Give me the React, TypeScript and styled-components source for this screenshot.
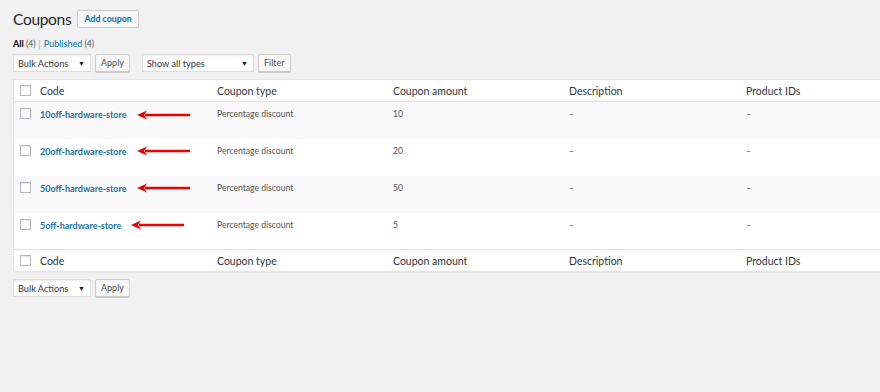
import styled, { createGlobalStyle } from "styled-components";

const Global = createGlobalStyle`
  body {
    margin: 0;
    background: #f1f1f1;
    font-family: Lato, "Noto Sans", sans-serif;
    color: #444;
    font-size: 11px;
  }
`;

const Wrap = styled.div`
  padding: 10px 0 0 13px;
  width: 880px;
  height: 392px;
  box-sizing: border-box;
  overflow: hidden;
`;
const TitleRow = styled.div`
  display: flex;
  align-items: center;
  gap: 6px;
  height: 18px;
`;
const Title = styled.h1`
  margin: 0;
  font-size: 15.5px;
  letter-spacing: -0.3px;
  font-weight: 400;
  color: #23282d;
  line-height: 18px;
`;
const AddButton = styled.a`
  display: inline-block;
  border: 1px solid #ccc;
  background: #f7f7f7;
  color: #0073aa;
  font-size: 8.8px;
  font-weight: 700;
  padding: 0 6px;
  height: 18px;
  line-height: 16px;
  box-sizing: border-box;
  border-radius: 2px;
`;
const Views = styled.div`
  margin-top: 10px;
  font-size: 9px;
  color: #555;
  height: 12px;
  line-height: 12px;
  b { color: #000; font-weight: 700; }
  a { color: #0073aa; }
  span.count { color: #555; font-size: 8.5px; }
`;
const Sep = styled.span`
  color: #a0a5aa;
  margin: 0 3px;
`;
const Actions = styled.div<{ top: number }>`
  display: flex;
  align-items: center;
  height: 18px;
  margin-top: ${(p) => p.top}px;
`;
const Select = styled.div<{ w: number; ml?: number }>`
  width: ${(p) => p.w}px;
  margin-left: ${(p) => p.ml || 0}px;
  height: 18px;
  box-sizing: border-box;
  border: 1px solid #ddd;
  background: #fff;
  display: flex;
  align-items: center;
  justify-content: space-between;
  padding: 0 5px 0 4px;
  font-size: 9.2px;
  color: #32373c;
  box-shadow: inset 0 1px 2px rgba(0,0,0,0.07);
`;
const Caret = styled.span`
  font-size: 7px;
  color: #222;
`;
const Btn = styled.div<{ ml: number }>`
  margin-left: ${(p) => p.ml}px;
  height: 18px;
  box-sizing: border-box;
  border: 1px solid #ccc;
  background: #f7f7f7;
  color: #555;
  font-size: 9px;
  padding: 0 5px;
  line-height: 16px;
  border-radius: 2px;
  box-shadow: 0 1px 0 #ccc;
`;
const Table = styled.table`
  margin-top: 7px;
  width: 900px;
  border-collapse: collapse;
  background: #fff;
  border: 1px solid #e5e5e5;
  border-right: none;
  box-shadow: 0 1px 1px rgba(0,0,0,0.04);
  table-layout: fixed;
`;
const Th = styled.th<{ w?: number }>`
  width: ${(p) => (p.w ? p.w + "px" : "auto")};
  text-align: left;
  font-weight: 400;
  font-size: 10.5px;
  color: #32373c;
  height: 21px;
  padding: 0;
  vertical-align: middle;
`;
const HeadRow = styled.tr<{ foot?: boolean }>`
  border-bottom: ${(p) => (p.foot ? "none" : "1px solid #e1e1e1")};
  border-top: ${(p) => (p.foot ? "1px solid #e1e1e1" : "none")};
`;
const Row = styled.tr<{ odd: boolean }>`
  background: ${(p) => (p.odd ? "#f9f9f9" : "#fff")};
  height: 37px;
`;
const Td = styled.td`
  padding: 6px 0 0 0;
  vertical-align: top;
  font-size: 8.6px;
  color: #555;
  line-height: 13px;
`;
const Box = styled.span`
  display: block;
  width: 11px;
  height: 11px;
  border: 1px solid #b4b9be;
  box-sizing: border-box;
  background: #fff;
  margin-left: 6px;
  box-shadow: inset 0 1px 2px rgba(0,0,0,0.1);
`;
const CodeCell = styled.div`
  display: flex;
  align-items: center;
  gap: 10px;
`;
const CodeLink = styled.a`
  color: #1a72a0;
  font-weight: 700;
  font-size: 9px;
`;

function Arrow() {
  return (
    <svg width="54" height="10" viewBox="0 0 54 10">
      <line x1="8" y1="5" x2="53" y2="5" stroke="#e00" strokeWidth="2.6" />
      <polygon points="0,5 10,0.5 7,5 10,9.5" fill="#e00" />
    </svg>
  );
}

const rows = [
  { code: "10off-hardware-store", amount: "10" },
  { code: "20off-hardware-store", amount: "20" },
  { code: "50off-hardware-store", amount: "50" },
  { code: "5off-hardware-store", amount: "5" },
];

function Header({ foot }: { foot?: boolean }) {
  return (
    <HeadRow foot={foot}>
      <Th w={26}><Box /></Th>
      <Th w={177}>Code</Th>
      <Th w={176}>Coupon type</Th>
      <Th w={176}>Coupon amount</Th>
      <Th w={177}>Description</Th>
      <Th>Product IDs</Th>
    </HeadRow>
  );
}

export default function App() {
  return (
    <Wrap>
      <Global />
      <TitleRow>
        <Title>Coupons</Title>
        <AddButton>Add coupon</AddButton>
      </TitleRow>
      <Views>
        <b>All</b> <span className="count">(4)</span>
        <Sep>|</Sep>
        <a>Published</a> <span className="count">(4)</span>
      </Views>
      <Actions top={4}>
        <Select w={78}>Bulk Actions<Caret>▼</Caret></Select>
        <Btn ml={4}>Apply</Btn>
        <Select w={112} ml={12}>Show all types<Caret>▼</Caret></Select>
        <Btn ml={4}>Filter</Btn>
      </Actions>
      <Table>
        <thead>
          <Header />
        </thead>
        <tbody>
          {rows.map((r, i) => (
            <Row key={r.code} odd={i % 2 === 0}>
              <Td><Box /></Td>
              <Td>
                <CodeCell>
                  <CodeLink>{r.code}</CodeLink>
                  <Arrow />
                </CodeCell>
              </Td>
              <Td>Percentage discount</Td>
              <Td>{r.amount}</Td>
              <Td>–</Td>
              <Td>–</Td>
            </Row>
          ))}
        </tbody>
        <tfoot>
          <Header foot />
        </tfoot>
      </Table>
      <Actions top={7}>
        <Select w={78}>Bulk Actions<Caret>▼</Caret></Select>
        <Btn ml={4}>Apply</Btn>
      </Actions>
    </Wrap>
  );
}
